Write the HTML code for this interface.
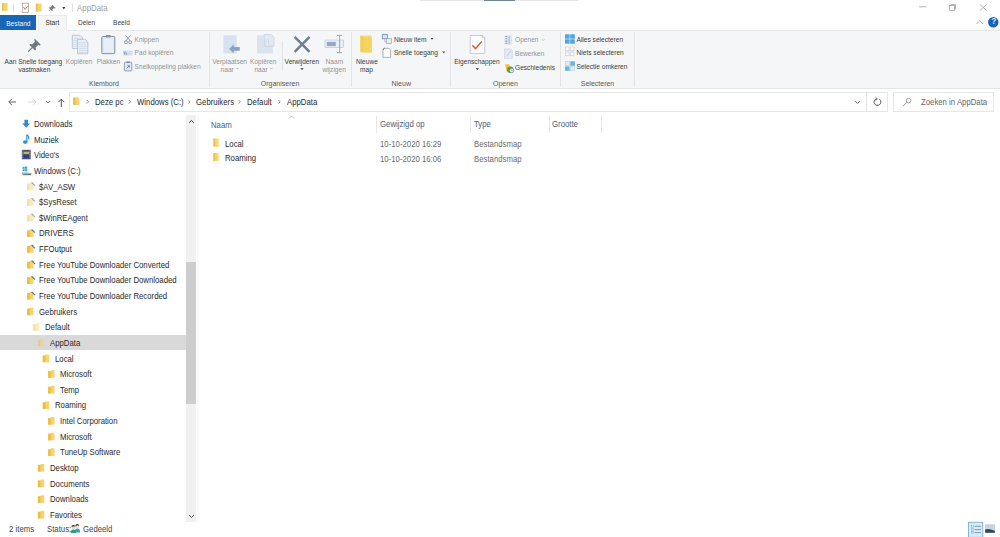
<!DOCTYPE html>
<html><head><meta charset="utf-8">
<style>
html,body{margin:0;padding:0;width:1000px;height:537px;overflow:hidden;background:#fff;}
body{position:relative;font-family:"Liberation Sans",sans-serif;color:#333;}
.a{position:absolute;}
.t{position:absolute;white-space:nowrap;line-height:1;}
.r{font-size:6.6px;color:#3c3c3c;margin-top:0.8px;}
.d{color:#949494;}
.g{font-size:7px;color:#585858;margin-top:0.5px;}
.n{font-size:8.2px;color:#2a2a2a;transform:scaleX(.95);transform-origin:0 0;margin-top:1px;}
svg{position:absolute;overflow:visible;}
</style></head><body>

<!-- top artifact -->
<div class="a" style="left:420px;top:0;width:158px;height:1px;background:#e4e6e8"></div>
<div class="a" style="left:484px;top:0;width:31px;height:1px;background:#6f8797"></div>

<!-- TITLE BAR -->
<svg style="left:0;top:0" width="80" height="15">
  <rect x="2" y="3" width="5.6" height="7.8" fill="#f6d468"/>
  <rect x="2" y="3" width="1.8" height="7.8" fill="#efc44e"/>
  <line x1="13.4" y1="3.4" x2="13.4" y2="12" stroke="#d2d2d2" stroke-width="0.7"/>
  <rect x="22.3" y="3.1" width="6.3" height="9.5" fill="#fff" stroke="#9a9590" stroke-width="0.7"/>
  <path d="M23.4 7 L25.2 9.4 L27.6 6" fill="none" stroke="#c8684e" stroke-width="0.9"/>
  <rect x="35.8" y="3.6" width="5.9" height="8" fill="#f6d468"/>
  <rect x="35.8" y="3.6" width="1.8" height="8" fill="#efc44e"/>
  <path d="M52.6 5 L55.6 8 L54.8 8.4 L53.9 8.1 L52.4 9.6 L52.6 10.6 L52 11 L48.8 7.8 L49.2 7.2 L50.2 7.4 L51.7 5.9 L51.5 5 Z" fill="#7d7d7d"/>
  <path d="M50.4 9.4 L49 10.8" stroke="#7d7d7d" stroke-width="0.9"/>
  <path d="M62.3 7 H65.4 L63.85 9.6 Z" fill="#3a3a3a"/>
  <line x1="72.5" y1="3.5" x2="72.5" y2="11.8" stroke="#d2d2d2" stroke-width="0.7"/>
</svg>
<div class="t" style="left:76.6px;top:3.6px;font-size:8.4px;color:#a0a0a0;transform:scaleX(.94);transform-origin:0 0">AppData</div>

<!-- window controls -->
<svg style="left:900px;top:0" width="100" height="30">
  <line x1="19" y1="6.8" x2="26.5" y2="6.8" stroke="#9a9a9a" stroke-width="0.75"/>
  <rect x="49.5" y="5.5" width="5" height="5" fill="none" stroke="#9a9a9a" stroke-width="0.75"/>
  <path d="M51 5.5 V4.5 H55.5 V9 H54.5" fill="none" stroke="#9a9a9a" stroke-width="0.75"/>
  <path d="M80 4.5 L86.5 10.5 M86.5 4.5 L80 10.5" stroke="#9a9a9a" stroke-width="0.75"/>
  <path d="M76.5 24 L79.7 20.8 L83 24" fill="none" stroke="#9a9a9a" stroke-width="0.75"/>
  <circle cx="93.3" cy="22.3" r="5.2" fill="#1465b6"/>
</svg>
<div class="t" style="left:991.3px;top:18.3px;font-size:8.2px;font-weight:bold;color:#d8ecfc">?</div>

<!-- TABS -->
<div class="a" style="left:0;top:15px;width:36.2px;height:14.6px;background:#1866b6"></div>
<div class="t" style="left:6.2px;top:20.5px;font-size:6.65px;color:#f4f8fc">Bestand</div>
<div class="a" style="left:38px;top:14.8px;width:29px;height:15px;background:#f5f6f7;border:0.8px solid #e9eaeb;border-bottom:none;box-sizing:border-box"></div>
<div class="t r" style="left:45.4px;top:19.4px;color:#333">Start</div>
<div class="t r" style="left:77.9px;top:19.4px;color:#444">Delen</div>
<div class="t r" style="left:113px;top:19.4px;color:#444">Beeld</div>

<!-- RIBBON BODY -->
<div class="a" style="left:0;top:29.6px;width:1000px;height:59px;background:#f5f6f7;border-bottom:1px solid #e3e4e5;box-sizing:border-box"></div>
<div class="a" style="left:67px;top:29.6px;width:933px;height:0.8px;background:#e6e7e8"></div>
<!-- group separators -->
<div class="a" style="left:208.5px;top:32px;width:0.8px;height:55px;background:#e2e3e4"></div>
<div class="a" style="left:351.3px;top:32px;width:0.8px;height:55px;background:#e2e3e4"></div>
<div class="a" style="left:450.4px;top:32px;width:0.8px;height:55px;background:#e2e3e4"></div>
<div class="a" style="left:560px;top:32px;width:0.8px;height:55px;background:#e2e3e4"></div>
<div class="a" style="left:634px;top:32px;width:0.8px;height:55px;background:#e2e3e4"></div>
<div class="a" style="left:282px;top:40.6px;width:0.8px;height:30px;background:#e2e3e4"></div>

<!-- Klembord -->
<div class="t r" style="left:4.6px;top:58.1px">Aan Snelle toegang</div>
<div class="t r" style="left:18.5px;top:66.6px">vastmaken</div>
<div class="t r d" style="left:65.8px;top:58.1px">Kopiëren</div>
<div class="t r d" style="left:96.7px;top:58.1px">Plakken</div>
<div class="t r d" style="left:134.6px;top:36.2px">Knippen</div>
<div class="t r d" style="left:134.6px;top:49.6px">Pad kopiëren</div>
<div class="t r d" style="left:134.6px;top:63.1px">Snelkoppeling plakken</div>
<div class="t g" style="left:89px;top:79.9px">Klembord</div>

<!-- Organiseren -->
<div class="t r d" style="left:212.2px;top:58.1px">Verplaatsen</div>
<div class="t r d" style="left:220.6px;top:66.6px">naar</div>
<div class="t r d" style="left:250px;top:58.1px">Kopiëren</div>
<div class="t r d" style="left:254.4px;top:66.6px">naar</div>
<div class="t r" style="left:284.6px;top:58.1px">Verwijderen</div>
<div class="t r d" style="left:325.6px;top:58.1px">Naam</div>
<div class="t r d" style="left:322.4px;top:66.6px">wijzigen</div>
<div class="t g" style="left:260.8px;top:79.9px">Organiseren</div>

<!-- Nieuw -->
<div class="t r" style="left:355.9px;top:58.1px">Nieuwe</div>
<div class="t r" style="left:360px;top:66.6px">map</div>
<div class="t r" style="left:393.9px;top:35.9px">Nieuw item</div>
<div class="t r" style="left:393.9px;top:49.2px">Snelle toegang</div>
<div class="t g" style="left:391.5px;top:79.9px">Nieuw</div>

<!-- Openen -->
<div class="t r" style="left:454.2px;top:58.1px">Eigenschappen</div>
<div class="t r d" style="left:515px;top:36.6px">Openen</div>
<div class="t r d" style="left:515px;top:50.6px">Bewerken</div>
<div class="t r" style="left:515px;top:64.6px">Geschiedenis</div>
<div class="t g" style="left:493px;top:79.9px">Openen</div>

<!-- Selecteren -->
<div class="t r" style="left:576.5px;top:35.9px">Alles selecteren</div>
<div class="t r" style="left:576.5px;top:49.6px">Niets selecteren</div>
<div class="t r" style="left:576.5px;top:63.3px">Selectie omkeren</div>
<div class="t g" style="left:580.8px;top:79.9px">Selecteren</div>


<!-- RIBBON ICONS -->
<svg style="left:0;top:0" width="1000" height="90">
  <!-- pin -->
  <g fill="#6f7884">
    <path d="M34.5 38.5 L40.8 44.8 L39.6 45.4 L38.2 45.0 L35.6 47.6 L36.0 49.6 L35.0 50.4 L29.5 44.9 L30.3 43.9 L32.3 44.3 L34.9 41.7 L34.5 40.3 Z"/>
    <path d="M32.2 47.6 L28.2 51.6" stroke="#6f7884" stroke-width="1.3"/>
  </g>
  <!-- copy -->
  <g stroke="#aab6c6" stroke-width="0.7" fill="#e6edf7">
    <path d="M72.3 35.3 H80 L82.5 37.8 V48.5 H72.3 Z"/>
    <path d="M77.5 39.3 H85.3 L87.8 41.8 V53.8 H77.5 Z"/>
  </g>
  <g stroke="#c4cedb" stroke-width="0.5">
    <path d="M73.5 38.5 H81 M73.5 40.5 H77 M73.5 42.5 H77 M73.5 44.5 H77 M73.5 46.5 H77"/>
    <path d="M79 42.5 H86.5 M79 44.5 H86.5 M79 46.5 H86.5 M79 48.5 H86.5 M79 50.5 H86.5 M79 52.5 H86.5"/>
  </g>
  <!-- paste -->
  <rect x="101.8" y="36.5" width="13" height="17.2" rx="0.8" fill="#dfe7f3" stroke="#8592a3" stroke-width="1"/>
  <rect x="106" y="35" width="4.6" height="2.4" fill="#8592a3"/>
  <rect x="103.6" y="38.5" width="9.4" height="13.4" fill="#e9eff8"/>
  <!-- scissors -->
  <g stroke="#8d9bb0" stroke-width="0.9" fill="none">
    <path d="M125.6 35.2 L130.4 41.2 M130.6 35.2 L125.8 41.2"/>
    <circle cx="126" cy="42.2" r="1.5"/>
    <circle cx="130.2" cy="42.2" r="1.5"/>
  </g>
  <!-- path copy -->
  <rect x="123" y="50.6" width="9.7" height="5" fill="#d4def0"/>
  <path d="M124 51.8 L125 54.6 M125.6 51.8 L126.6 54.6" stroke="#5a6a85" stroke-width="0.6"/>
  <!-- shortcut paste -->
  <rect x="124.4" y="62.3" width="7.4" height="8.6" rx="0.5" fill="#dfe7f3" stroke="#8592a3" stroke-width="0.8"/>
  <rect x="126.6" y="61.4" width="3" height="1.6" fill="#8592a3"/>
  <path d="M126.5 68.5 L129.3 65.7 M127.3 65.7 H129.3 V67.7" stroke="#4a6a9a" stroke-width="0.7" fill="none"/>

  <!-- move to -->
  <rect x="223.4" y="35.3" width="13.3" height="18.1" fill="#d6e2f1"/>
  <path d="M229.2 48.9 L233.7 44.3 V47.1 H239.8 V50.7 H233.7 V53.5 Z" fill="#8ea2bf"/>
  <!-- copy to -->
  <rect x="257" y="35.3" width="16" height="18.1" fill="#dbe3ef"/>
  <path d="M264.3 34.6 H271 L274 37.6 V46.2 H264.3 Z" fill="#e4eaf3" stroke="#c0cad8" stroke-width="0.6"/>
  <path d="M266 38.5 V44.5 M268.5 39 V44.5" stroke="#c8d1de" stroke-width="0.6"/>
  <!-- delete X -->
  <path d="M294.6 36.8 L309.6 51.8 M309.6 36.8 L294.6 51.8" stroke="#6e7c94" stroke-width="2.4"/>
  <!-- rename -->
  <rect x="325" y="40" width="18.4" height="7.6" fill="#e8eef7" stroke="#b4c2d6" stroke-width="0.6"/>
  <rect x="326.8" y="41.9" width="9" height="4.2" fill="#94a8c4"/>
  <path d="M339.6 35.4 V52.6 M337 35.4 H342.2 M337 52.6 H342.2" stroke="#8d98a8" stroke-width="0.8" fill="none"/>
  <!-- new folder -->
  <path d="M360.4 35.6 H371.6 L372 52.4 H360.4 Z" fill="#f8dc78"/>
  <path d="M360.4 35.6 L364.6 37.2 V52.4 L360.4 51.6 Z" fill="#f2cf5c"/>
  <path d="M364.6 37.2 H371.8 V52.4 H364.6 Z" fill="#f6d35e"/>
  <!-- new item -->
  <rect x="382.3" y="34.3" width="5" height="4.5" fill="#dbe5f2" stroke="#5f7ea6" stroke-width="0.7"/>
  <rect x="386.3" y="38.5" width="5" height="5" fill="#e9edf2" stroke="#98a2ae" stroke-width="0.7"/>
  <path d="M384.8 39 V42 H386.3" stroke="#98a2ae" stroke-width="0.6" fill="none"/>
  <!-- quick access page -->
  <path d="M383 49.5 L384.2 48.3 H389 L390.6 49.9 V57.4 H383 Z" fill="#fbfbfc" stroke="#8a939e" stroke-width="0.7"/>
  <path d="M383 49.6 L384.5 48.2" stroke="#3e4d66" stroke-width="1"/>

  <!-- properties -->
  <path d="M470.2 35.5 H482.5 L484.8 37.8 V53.5 H470.2 Z" fill="#fdfdfd" stroke="#b3b6bb" stroke-width="0.7"/>
  <path d="M482.3 35.5 V38 H484.8" fill="#dde5ef" stroke="#9fb0c6" stroke-width="0.5"/>
  <path d="M472.3 45.2 L475.6 48.6 L481.6 41.5" fill="none" stroke="#d9583b" stroke-width="1.4"/>
  <path d="M475.5 68.2 H479 L477.25 70 Z" fill="#333"/>
  <!-- openen -->
  <rect x="504.5" y="35.2" width="7.5" height="9.6" fill="#dfe6f0"/>
  <path d="M505.3 36.5 H507.3 M505.3 38.8 H507.3 M505.3 41.1 H507.3 M505.3 43.3 H507.3" stroke="#95a6be" stroke-width="1.1"/>
  <path d="M509.2 36 V44.3" stroke="#b4c1d3" stroke-width="1.2"/>
  <!-- bewerken -->
  <path d="M504.6 49 H510.6 L512.2 50.6 V58.6 H504.6 Z" fill="#e3ebf5" stroke="#c2cfdf" stroke-width="0.6"/>
  <path d="M507 56 L510.5 51" stroke="#b6c6da" stroke-width="0.8"/>
  <!-- geschiedenis -->
  <path d="M505 64.5 L508.6 64 L511 67.5 L507 72.5 Z" fill="#f2c13a"/>
  <circle cx="510.3" cy="69.8" r="3.2" fill="#4da03a"/>
  <circle cx="511.6" cy="70.5" r="2.2" fill="#eef0f3" stroke="#6a6f7a" stroke-width="0.6"/>
  <path d="M511.6 69.3 V70.6 H512.6" stroke="#555" stroke-width="0.4" fill="none"/>

  <!-- select all -->
  <g fill="#4ea5e0">
    <rect x="565" y="34.3" width="4.6" height="4.4"/><rect x="570.2" y="34.3" width="4.6" height="4.4"/>
    <rect x="565" y="39.3" width="4.6" height="4.4"/><rect x="570.2" y="39.3" width="4.6" height="4.4"/>
  </g>
  <!-- select none -->
  <g fill="#fafafa" stroke="#c8c8c8" stroke-width="0.6">
    <rect x="565.3" y="47" width="3.8" height="3.8"/><rect x="570.2" y="47" width="3.8" height="3.8"/>
    <rect x="565.3" y="52" width="3.8" height="3.8"/><rect x="570.2" y="52" width="3.8" height="3.8"/>
  </g>
  <!-- invert -->
  <rect x="565.3" y="61.6" width="4.2" height="4.2" fill="#e6eef5" stroke="#9ec7e3" stroke-width="0.5"/>
  <rect x="570.3" y="61.2" width="4.6" height="4.6" fill="#6db3df"/>
  <rect x="565" y="66.4" width="4.6" height="4.4" fill="#6db3df"/>
  <rect x="570.3" y="66.6" width="4.2" height="4.2" fill="#e6eef5" stroke="#9ec7e3" stroke-width="0.5"/>
  <path d="M236.3 67.9 L237.4 69.1 L238.5 67.9 M270.3 67.9 L271.4 69.1 L272.5 67.9 M542.1 39.3 L543.2 40.5 L544.3 39.3" fill="none" stroke="#a0a0a0" stroke-width="0.7"/>
  <path d="M430.4 38 H433.6 L432 39.8 Z M442.2 51.4 H445.4 L443.8 53.2 Z" fill="#444"/>
  <!-- verwijderen arrow -->
  <path d="M300.3 68.2 H303.8 L302.05 70 Z" fill="#333"/>
</svg>

<!-- ADDRESS ROW -->
<div class="a" style="left:69.4px;top:91.6px;width:818.2px;height:20px;border:0.8px solid #e6e6e6;box-sizing:border-box"></div>
<div class="a" style="left:866.4px;top:91.6px;width:0.8px;height:20px;background:#e3e3e3"></div>
<div class="a" style="left:893.4px;top:91.6px;width:100.4px;height:20px;border:0.8px solid #e6e6e6;box-sizing:border-box"></div>
<div class="t n" style="left:94.8px;top:97.7px">Deze pc</div>
<div class="t n" style="left:137.2px;top:97.7px">Windows (C:)</div>
<div class="t n" style="left:196.3px;top:97.7px">Gebruikers</div>
<div class="t n" style="left:247.4px;top:97.7px">Default</div>
<div class="t n" style="left:286.6px;top:97.7px">AppData</div>
<div class="t n" style="left:920.5px;top:97.7px;color:#666">Zoeken in AppData</div>


<!-- ADDRESS ICONS -->
<svg style="left:0;top:0" width="1000" height="537">
  <path d="M16 102 H9 M12 98.8 L8.8 102 L12 105.2" fill="none" stroke="#505050" stroke-width="0.9"/>
  <path d="M27.5 102 H36 M32.8 98.8 L36 102 L32.8 105.2" fill="none" stroke="#d4d4d4" stroke-width="0.9"/>
  <path d="M46.2 101 L48.2 103 L50.2 101" fill="none" stroke="#555" stroke-width="0.8"/>
  <path d="M61.3 107 V99.3 M58.3 102.2 L61.3 99.2 L64.3 102.2" fill="none" stroke="#404040" stroke-width="0.9"/>
  <path d="M73.2 97.6 H79.2 V105 H73.2 Z" fill="#f6d36a"/>
  <rect x="73.2" y="97.6" width="2.2" height="7.4" fill="#ebbd48"/>
  <g fill="none" stroke="#6a6a6a" stroke-width="0.8">
    <path d="M86.8 100 L88.6 101.8 L86.8 103.6"/>
    <path d="M128.8 100 L130.6 101.8 L128.8 103.6"/>
    <path d="M188.2 100 L190 101.8 L188.2 103.6"/>
    <path d="M238.5 100 L240.3 101.8 L238.5 103.6"/>
    <path d="M278.4 100 L280.2 101.8 L278.4 103.6"/>
  </g>
  <path d="M855.4 101.2 L857.6 103.4 L859.8 101.2" fill="none" stroke="#444" stroke-width="0.9"/>
  <path d="M879.4 99.2 A3.4 3.4 0 1 1 876.2 98.8" fill="none" stroke="#555" stroke-width="1"/>
  <path d="M875.6 97.4 L877.3 98.9 L875.6 100.5" fill="none" stroke="#555" stroke-width="0.9"/>
  <circle cx="908.6" cy="100.6" r="2.3" fill="none" stroke="#888" stroke-width="0.8"/>
  <path d="M906.9 102.3 L903.2 106" stroke="#888" stroke-width="0.9"/>

  <!-- sort arrow -->
  <path d="M289.3 118.3 L291.6 116 L293.9 118.3" fill="none" stroke="#9aa0a8" stroke-width="0.7"/>
  <!-- content folders -->
  <g>
    <path d="M213.5 138.6 H218.6 V146.7 H213.5 Z" fill="#f6d46e"/><rect x="213.5" y="138.6" width="1.6" height="8.1" fill="#eabf4c"/><rect x="217.4" y="139" width="1.2" height="7.7" fill="#f9e08e"/>
    <path d="M213.5 153 H218.6 V161.1 H213.5 Z" fill="#f6d46e"/><rect x="213.5" y="153" width="1.6" height="8.1" fill="#eabf4c"/><rect x="217.4" y="153.4" width="1.2" height="7.7" fill="#f9e08e"/>
  </g>
  <!-- status icon -->
  <circle cx="77.2" cy="526.4" r="1.9" fill="#e6dccc"/>
  <path d="M75.2 526 Q75.4 524 77.2 524 Q79.2 524 79.2 526 Q78.2 525.2 77.2 525.4 Q76 525.4 75.2 526 Z" fill="#3a3028"/>
  <path d="M74.6 532.4 Q74.6 528.6 77.4 528.6 Q80.2 528.6 80.2 532.4 Z" fill="#3aa0b8"/>
  <circle cx="73.4" cy="527.4" r="1.9" fill="#e6dccc"/>
  <path d="M71.4 527 Q71.6 525 73.4 525 Q75.4 525 75.4 527 Q74.4 526.2 73.4 526.4 Q72.2 526.4 71.4 527 Z" fill="#3a3028"/>
  <path d="M70.6 533 Q70.6 529.4 73.4 529.4 Q76.2 529.4 76.2 533 Z" fill="#2f9a7a"/>
  <!-- view buttons -->
  <rect x="968.4" y="522.3" width="14.4" height="15" fill="#d5ecfa" stroke="#6fa6cf" stroke-width="0.8"/>
  <g stroke="#9aa3ad" stroke-width="0.5" fill="none">
    <rect x="971.3" y="525.4" width="2" height="2"/><rect x="971.3" y="528.6" width="2" height="2"/><rect x="971.3" y="531.6" width="2" height="2"/>
  </g>
  <path d="M974.6 526.3 H981 M974.6 529.6 H981 M974.6 532.6 H981" stroke="#55606c" stroke-width="0.6"/>
  <rect x="985.2" y="524.8" width="9.6" height="8" fill="#c2d6ea"/>
  <rect x="985.2" y="524.8" width="9.6" height="8" fill="none" stroke="#b8c4d0" stroke-width="0.5"/>
  <path d="M985.2 529.6 Q988 527.8 994.8 530.8 V532.8 H985.2 Z" fill="#2e4a48"/>
</svg>

<!-- NAV PANE -->
<div class="a" style="left:0;top:334.9px;width:186px;height:14.8px;background:#d9d9d9"></div>
<div class="a" style="left:196.5px;top:115px;width:2.5px;height:407px;background:#f9f9f9"></div>
<div class="a" style="left:186.3px;top:115px;width:10.2px;height:407px;background:#f0f0f0"></div>
<div class="a" style="left:186.3px;top:262px;width:10.2px;height:142px;background:#cdcdcd"></div>

<svg style="left:0;top:0" width="200" height="537">
  <path d="M189.1 122.8 L191.5 120.3 L193.9 122.8" fill="none" stroke="#4a4a4a" stroke-width="1"/>
  <path d="M189.1 515 L191.5 517.5 L193.9 515" fill="none" stroke="#4a4a4a" stroke-width="1"/>
</svg>
<div id="nav">
<div class="t n" style="left:34px;top:120.0px">Downloads</div>
<div class="t n" style="left:34px;top:135.6px">Muziek</div>
<div class="t n" style="left:34px;top:151.3px">Video's</div>
<div class="t n" style="left:34px;top:166.9px">Windows (C:)</div>
<div class="t n" style="left:39px;top:182.5px">$AV_ASW</div>
<div class="t n" style="left:39px;top:198.2px">$SysReset</div>
<div class="t n" style="left:39px;top:213.8px">$WinREAgent</div>
<div class="t n" style="left:39px;top:229.4px">DRIVERS</div>
<div class="t n" style="left:39px;top:245.0px">FFOutput</div>
<div class="t n" style="left:39px;top:260.7px">Free YouTube Downloader Converted</div>
<div class="t n" style="left:39px;top:276.3px">Free YouTube Downloader Downloaded</div>
<div class="t n" style="left:39px;top:291.9px">Free YouTube Downloader Recorded</div>
<div class="t n" style="left:39px;top:307.6px">Gebruikers</div>
<div class="t n" style="left:44.7px;top:323.2px">Default</div>
<div class="t n" style="left:49.7px;top:338.8px">AppData</div>
<div class="t n" style="left:54.6px;top:354.5px">Local</div>
<div class="t n" style="left:60px;top:370.1px">Microsoft</div>
<div class="t n" style="left:60px;top:385.7px">Temp</div>
<div class="t n" style="left:54.6px;top:401.3px">Roaming</div>
<div class="t n" style="left:60px;top:417.0px">Intel Corporation</div>
<div class="t n" style="left:60px;top:432.6px">Microsoft</div>
<div class="t n" style="left:60px;top:448.2px">TuneUp Software</div>
<div class="t n" style="left:49.7px;top:463.9px">Desktop</div>
<div class="t n" style="left:49.7px;top:479.5px">Documents</div>
<div class="t n" style="left:49.7px;top:495.1px">Downloads</div>
<div class="t n" style="left:49.7px;top:510.8px">Favorites</div>
<svg style="left:0;top:0" width="200" height="537">
<path d="M24.4 119.7 h3.6 v3.8 h2.2 l-4 4.3 l-4 -4.3 h2.2 z" fill="#2f8ad8"/>
<path d="M26.8 134.7 v7.4" stroke="#2f90dc" stroke-width="1.2"/><ellipse cx="25.2" cy="142.1" rx="2.3" ry="1.8" fill="#2f90dc"/><path d="M26.8 134.8 q2.6 1.6 1.8 4.6" stroke="#2f90dc" stroke-width="1.1" fill="none"/>
<rect x="21.8" y="149.8" width="9" height="9.5" fill="#5a5f86"/><rect x="23.4" y="150.6" width="5.8" height="7.9" fill="#2d3f78"/><rect x="23.4" y="151.6" width="5.8" height="2.6" fill="#c8b04a"/><path d="M22.6 150.4 v8.5 M30.0 150.4 v8.5" stroke="#b8bcd0" stroke-width="0.6" stroke-dasharray="0.8 0.9"/>
<path d="M21.6 172.6 L23.4 174.6 H31.4 L31.8 173.2 L27.2 172.4 Z" fill="#a4acb8"/><path d="M22.2 173.6 L23.6 174.7 H31.2" stroke="#2c3440" stroke-width="0.7" fill="none"/><g fill="#27a9dd"><rect x="22.6" y="166.8" width="2" height="2"/><rect x="25.0" y="166.5" width="2.2" height="2.3"/><rect x="22.6" y="169.2" width="2" height="2"/><rect x="25.0" y="169.2" width="2.2" height="2.2"/></g>
<g transform="translate(27.2,182.6)" opacity="0.45"><path d="M0 1 H2.2 L3 0 H6.3 V7.6 H0 Z" fill="#f6d36c"/><rect x="0" y="1" width="2.6" height="6.6" fill="#ecbd45"/></g>
<path d="M31.6 182.4 L33.2 184.0" stroke="#3f7a6a" stroke-width="1.2" opacity="0.55"/><path d="M33.2 184.0 L35.0 185.8" stroke="#5660c8" stroke-width="1.2" opacity="0.55"/>
<g transform="translate(27.2,198.2)" opacity="0.45"><path d="M0 1 H2.2 L3 0 H6.3 V7.6 H0 Z" fill="#f6d36c"/><rect x="0" y="1" width="2.6" height="6.6" fill="#ecbd45"/></g>
<path d="M31.6 198.1 L33.2 199.7" stroke="#3f7a6a" stroke-width="1.2" opacity="0.55"/><path d="M33.2 199.7 L35.0 201.4" stroke="#5660c8" stroke-width="1.2" opacity="0.55"/>
<g transform="translate(27.2,213.9)" opacity="0.45"><path d="M0 1 H2.2 L3 0 H6.3 V7.6 H0 Z" fill="#f6d36c"/><rect x="0" y="1" width="2.6" height="6.6" fill="#ecbd45"/></g>
<path d="M31.6 213.7 L33.2 215.3" stroke="#3f7a6a" stroke-width="1.2" opacity="0.55"/><path d="M33.2 215.3 L35.0 217.1" stroke="#5660c8" stroke-width="1.2" opacity="0.55"/>
<g transform="translate(27.2,229.5)"><path d="M0 1 H2.2 L3 0 H6.3 V7.6 H0 Z" fill="#f6d36c"/><rect x="0" y="1" width="2.6" height="6.6" fill="#ecbd45"/></g>
<path d="M31.6 229.3 L33.2 230.9" stroke="#3f7a6a" stroke-width="1.2" opacity="0.95"/><path d="M33.2 230.9 L35.0 232.7" stroke="#5660c8" stroke-width="1.2" opacity="0.95"/>
<g transform="translate(27.2,245.1)"><path d="M0 1 H2.2 L3 0 H6.3 V7.6 H0 Z" fill="#f6d36c"/><rect x="0" y="1" width="2.6" height="6.6" fill="#ecbd45"/></g>
<path d="M31.6 244.9 L33.2 246.5" stroke="#3f7a6a" stroke-width="1.2" opacity="0.95"/><path d="M33.2 246.5 L35.0 248.3" stroke="#5660c8" stroke-width="1.2" opacity="0.95"/>
<g transform="translate(27.2,260.8)"><path d="M0 1 H2.2 L3 0 H6.3 V7.6 H0 Z" fill="#f6d36c"/><rect x="0" y="1" width="2.6" height="6.6" fill="#ecbd45"/></g>
<path d="M31.6 260.6 L33.2 262.2" stroke="#3f7a6a" stroke-width="1.2" opacity="0.95"/><path d="M33.2 262.2 L35.0 264.0" stroke="#5660c8" stroke-width="1.2" opacity="0.95"/>
<g transform="translate(27.2,276.4)"><path d="M0 1 H2.2 L3 0 H6.3 V7.6 H0 Z" fill="#f6d36c"/><rect x="0" y="1" width="2.6" height="6.6" fill="#ecbd45"/></g>
<path d="M31.6 276.2 L33.2 277.8" stroke="#3f7a6a" stroke-width="1.2" opacity="0.95"/><path d="M33.2 277.8 L35.0 279.6" stroke="#5660c8" stroke-width="1.2" opacity="0.95"/>
<g transform="translate(27.2,292.0)"><path d="M0 1 H2.2 L3 0 H6.3 V7.6 H0 Z" fill="#f6d36c"/><rect x="0" y="1" width="2.6" height="6.6" fill="#ecbd45"/></g>
<path d="M31.6 291.8 L33.2 293.4" stroke="#3f7a6a" stroke-width="1.2" opacity="0.95"/><path d="M33.2 293.4 L35.0 295.2" stroke="#5660c8" stroke-width="1.2" opacity="0.95"/>
<g transform="translate(27.2,307.7)"><path d="M0 1 H2.2 L3 0 H6.3 V7.6 H0 Z" fill="#f6d36c"/><rect x="0" y="1" width="2.6" height="6.6" fill="#ecbd45"/></g>
<g transform="translate(32.9,323.3)" opacity="0.45"><path d="M0 1 H2.2 L3 0 H6.3 V7.6 H0 Z" fill="#f6d36c"/><rect x="0" y="1" width="2.6" height="6.6" fill="#ecbd45"/></g>
<g transform="translate(37.9,338.9)" opacity="0.45"><path d="M0 1 H2.2 L3 0 H6.3 V7.6 H0 Z" fill="#f6d36c"/><rect x="0" y="1" width="2.6" height="6.6" fill="#ecbd45"/></g>
<g transform="translate(42.8,354.6)"><path d="M0 1 H2.2 L3 0 H6.3 V7.6 H0 Z" fill="#f6d36c"/><rect x="0" y="1" width="2.6" height="6.6" fill="#ecbd45"/></g>
<g transform="translate(48.2,370.2)"><path d="M0 1 H2.2 L3 0 H6.3 V7.6 H0 Z" fill="#f6d36c"/><rect x="0" y="1" width="2.6" height="6.6" fill="#ecbd45"/></g>
<g transform="translate(48.2,385.8)"><path d="M0 1 H2.2 L3 0 H6.3 V7.6 H0 Z" fill="#f6d36c"/><rect x="0" y="1" width="2.6" height="6.6" fill="#ecbd45"/></g>
<g transform="translate(42.8,401.4)"><path d="M0 1 H2.2 L3 0 H6.3 V7.6 H0 Z" fill="#f6d36c"/><rect x="0" y="1" width="2.6" height="6.6" fill="#ecbd45"/></g>
<g transform="translate(48.2,417.1)"><path d="M0 1 H2.2 L3 0 H6.3 V7.6 H0 Z" fill="#f6d36c"/><rect x="0" y="1" width="2.6" height="6.6" fill="#ecbd45"/></g>
<g transform="translate(48.2,432.7)"><path d="M0 1 H2.2 L3 0 H6.3 V7.6 H0 Z" fill="#f6d36c"/><rect x="0" y="1" width="2.6" height="6.6" fill="#ecbd45"/></g>
<g transform="translate(48.2,448.3)"><path d="M0 1 H2.2 L3 0 H6.3 V7.6 H0 Z" fill="#f6d36c"/><rect x="0" y="1" width="2.6" height="6.6" fill="#ecbd45"/></g>
<g transform="translate(37.9,464.0)"><path d="M0 1 H2.2 L3 0 H6.3 V7.6 H0 Z" fill="#f6d36c"/><rect x="0" y="1" width="2.6" height="6.6" fill="#ecbd45"/></g>
<g transform="translate(37.9,479.6)"><path d="M0 1 H2.2 L3 0 H6.3 V7.6 H0 Z" fill="#f6d36c"/><rect x="0" y="1" width="2.6" height="6.6" fill="#ecbd45"/></g>
<g transform="translate(37.9,495.2)"><path d="M0 1 H2.2 L3 0 H6.3 V7.6 H0 Z" fill="#f6d36c"/><rect x="0" y="1" width="2.6" height="6.6" fill="#ecbd45"/></g>
<g transform="translate(37.9,510.8)"><path d="M0 1 H2.2 L3 0 H6.3 V7.6 H0 Z" fill="#f6d36c"/><rect x="0" y="1" width="2.6" height="6.6" fill="#ecbd45"/></g>
</svg>
</div><!--navend-->

<!-- CONTENT -->
<div class="t n" style="left:210.8px;top:120.6px;color:#4d6078">Naam</div>
<div class="t n" style="left:380.3px;top:120.4px;color:#4d6078">Gewijzigd op</div>
<div class="t n" style="left:473.9px;top:120.4px;color:#4d6078">Type</div>
<div class="t n" style="left:551.9px;top:120.4px;color:#4d6078">Grootte</div>
<div class="a" style="left:376.4px;top:115.6px;width:0.8px;height:17px;background:#e5e5e5"></div>
<div class="a" style="left:469.7px;top:115.6px;width:0.8px;height:17px;background:#e5e5e5"></div>
<div class="a" style="left:548.5px;top:115.6px;width:0.8px;height:17px;background:#e5e5e5"></div>
<div class="a" style="left:600.5px;top:115.6px;width:0.8px;height:17px;background:#e5e5e5"></div>

<div class="t n" style="left:224.6px;top:140.1px">Local</div>
<div class="t n" style="left:224.6px;top:154.4px">Roaming</div>
<div class="t n" style="left:380.3px;top:140.4px;color:#6d6d6d">10-10-2020 16:29</div>
<div class="t n" style="left:380.3px;top:154.7px;color:#6d6d6d">10-10-2020 16:06</div>
<div class="t n" style="left:474.4px;top:140.4px;color:#6d6d6d">Bestandsmap</div>
<div class="t n" style="left:474.4px;top:154.7px;color:#6d6d6d">Bestandsmap</div>

<!-- STATUS -->
<div class="t n" style="left:9px;top:525.1px;color:#444">2 items</div>
<div class="t n" style="left:46.8px;top:525.1px;color:#444">Status:</div>
<div class="t n" style="left:82.6px;top:525.1px;color:#444">Gedeeld</div>

</body></html>
